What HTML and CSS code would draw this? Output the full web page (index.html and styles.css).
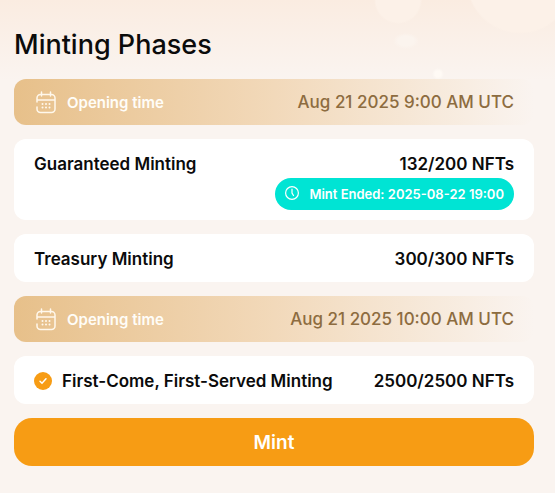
FILE: index.html
```html
<!DOCTYPE html>
<html lang="en">
<head>
    <meta charset="UTF-8">
    <meta name="viewport" content="width=device-width, initial-scale=1.0">
    <title>Minting Phases</title>
    <link rel="stylesheet" href="styles.css">
</head>
<body>
    <main class="phases">
        <h1 class="phases-title">Minting Phases</h1>

        <div class="opening">
            <svg class="icon-calendar" viewBox="0 0 24 24" aria-hidden="true">
                <path d="M3 12V8a3.500 3.500 0 0 1 3.500-3.500h11A3.500 3.500 0 0 1 21 8v11a3.500 3.500 0 0 1-3.500 3.500h-11A3.500 3.500 0 0 1 3 19v-2M3 10h18M7.500 2v4M16.500 2v4"/>
                <path class="dots" d="M8.500 14h.01M12 14h.01M15.500 14h.01M8.500 17.500h.01M12 17.500h.01M15.500 17.500h.01"/>
            </svg>
            <span class="opening-label">Opening time</span>
            <time class="opening-date" datetime="2025-08-21T09:00Z">Aug 21 2025 9:00 AM UTC</time>
        </div>

        <section class="phase">
            <div class="phase-row">
                <h2 class="phase-name">Guaranteed Minting</h2>
                <span class="phase-count">132/200 NFTs</span>
            </div>
            <div class="ended">
                <svg class="icon-clock" viewBox="0 0 16 16" aria-hidden="true">
                    <circle cx="8" cy="7" r="6.400"/>
                    <path d="M8 3v4l1.500 2.500"/>
                </svg>
                <span>Mint Ended: 2025-08-22 19:00</span>
            </div>
        </section>

        <section class="phase">
            <div class="phase-row">
                <h2 class="phase-name">Treasury Minting</h2>
                <span class="phase-count">300/300 NFTs</span>
            </div>
        </section>

        <div class="opening">
            <svg class="icon-calendar" viewBox="0 0 24 24" aria-hidden="true">
                <path d="M3 12V8a3.500 3.500 0 0 1 3.500-3.500h11A3.500 3.500 0 0 1 21 8v11a3.500 3.500 0 0 1-3.500 3.500h-11A3.500 3.500 0 0 1 3 19v-2M3 10h18M7.500 2v4M16.500 2v4"/>
                <path class="dots" d="M8.500 14h.01M12 14h.01M15.500 14h.01M8.500 17.500h.01M12 17.500h.01M15.500 17.500h.01"/>
            </svg>
            <span class="opening-label">Opening time</span>
            <time class="opening-date" datetime="2025-08-21T10:00Z">Aug 21 2025 10:00 AM UTC</time>
        </div>

        <section class="phase">
            <div class="phase-row">
                <svg class="icon-check" viewBox="0 0 18 18" aria-hidden="true">
                    <circle cx="9" cy="9" r="9"/>
                    <path d="M6 9.200l2 2 4-4.400"/>
                </svg>
                <h2 class="phase-name">First-Come, First-Served Minting</h2>
                <span class="phase-count">2500/2500 NFTs</span>
            </div>
        </section>

        <button type="button" class="mint-button">Mint</button>
    </main>
</body>
</html>
```
FILE: styles.css
```css
* {
    box-sizing: border-box;
}

body {
    min-height: 100vh;
    margin: 0;
    background-color: #faf4f0;
    /* soft bubbles over the warm fade at the top */
    background-image:
        radial-gradient(circle at 398px 0, #fcf1e8 22px, transparent 24px),
        radial-gradient(circle at 520px -20px, #fcf1e8 52px, transparent 54px),
        radial-gradient(ellipse 13px 8px at 406px 41px, #fbf4ee 60%, transparent),
        radial-gradient(circle at 438px 74px, #fffaf5 3px, transparent 6px),
        linear-gradient(#faece1, #faf4f0 80px);
    background-repeat: no-repeat;
    color: #0b0b0b;
    font-family: Inter, sans-serif;
}

.phases {
    display: flex;
    flex-direction: column;
    gap: 14px;
    padding: 30px 21px 26px 14px;
}

.phases-title {
    margin: 0 0 5px;
    font-size: 27px;
    font-weight: 500;
    line-height: 30px;
}

.opening {
    display: flex;
    align-items: center;
    min-height: 46px;
    padding: 0 20px;
    border-radius: 12px;
    background: linear-gradient(90deg, #e7c08a, #f2d9ba 50%, rgba(250, 244, 240, 0));
}

.icon-calendar {
    width: 24px;
    height: 24px;
    margin-right: 9px;
    fill: none;
    stroke: #fff8ec;
    stroke-width: 1.5;
    stroke-linecap: round;
}

.icon-calendar .dots {
    stroke-width: 2;
}

.opening-label {
    color: #fffdf8;
    font-size: 15px;
    font-weight: 600;
}

.opening-date {
    margin-left: auto;
    color: #8d6c40;
    font-size: 17px;
    font-weight: 500;
}

.phase {
    display: flex;
    flex-direction: column;
    padding: 11px 20px 10px;
    border-radius: 12px;
    background-color: white;
}

.phase-row {
    display: flex;
    align-items: center;
    min-height: 27px;
}

.phase-name {
    margin: 0;
    font-size: 17px;
    font-weight: 600;
}

.phase-count {
    margin-left: auto;
    font-size: 17px;
    font-weight: 600;
}

.icon-check {
    width: 18px;
    height: 18px;
    margin-right: 10px;
    fill: #f79c14;
}

.icon-check path {
    fill: none;
    stroke: white;
    stroke-width: 1.5;
    stroke-linecap: round;
}

.ended {
    display: flex;
    align-items: center;
    align-self: flex-end;
    gap: 9px;
    min-height: 32px;
    margin-top: 1px;
    padding: 0 10px 0 9px;
    border-radius: 16px;
    background-color: #00e4d4;
    color: white;
    font-size: 13px;
    font-weight: 600;
}

.icon-clock {
    width: 16px;
    height: 16px;
    fill: none;
    stroke: white;
    stroke-width: 1.2;
    stroke-linecap: round;
}

.mint-button {
    min-height: 48px;
    border: none;
    border-radius: 18px;
    background-color: #f79c14;
    color: white;
    font-family: inherit;
    font-size: 19px;
    font-weight: 600;
    cursor: pointer;
}
```
